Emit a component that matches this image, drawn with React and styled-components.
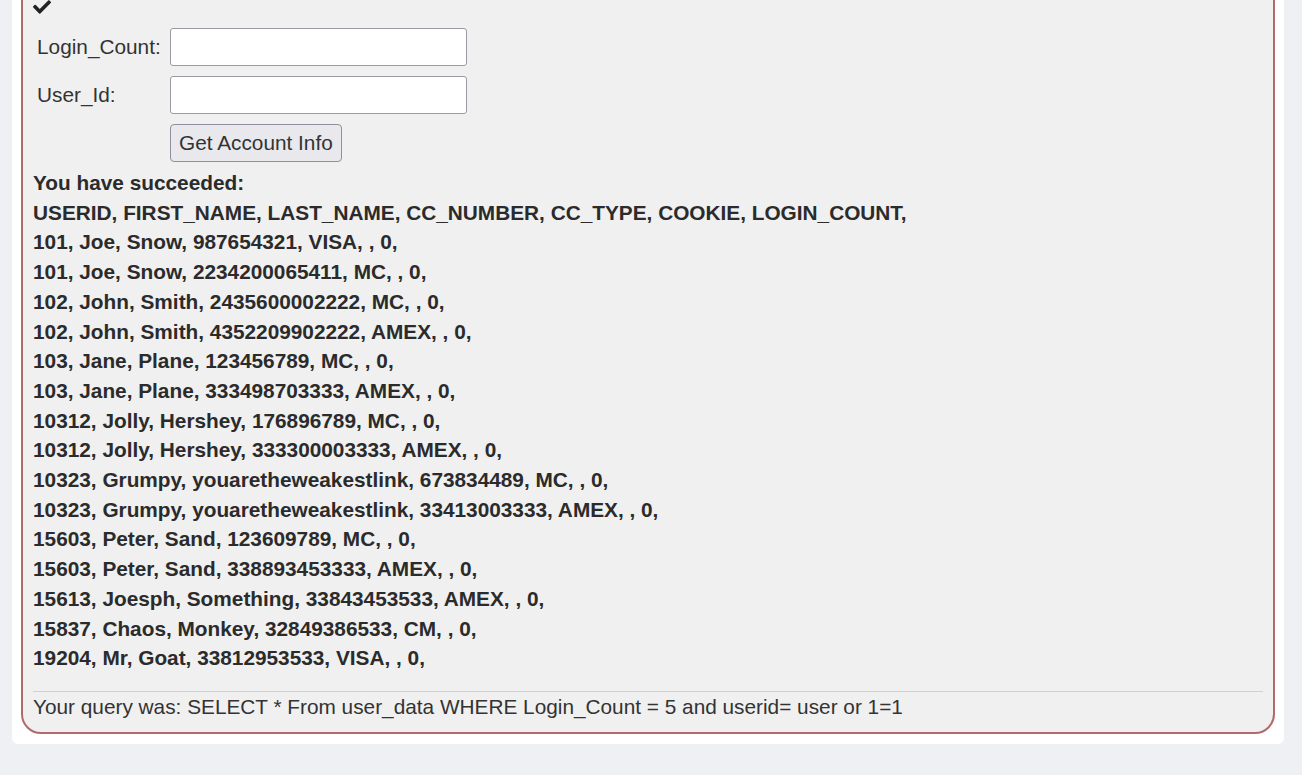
import styled, { createGlobalStyle } from "styled-components";
import { FaCheck } from "react-icons/fa";

const GlobalStyle = createGlobalStyle`
  html, body {
    margin: 0;
    padding: 0;
    background: #eff0f4;
    font-family: "Liberation Sans", Arial, sans-serif;
    color: #333;
    overflow: hidden;
  }
`;

const rows = [
  "101, Joe, Snow, 987654321, VISA, , 0,",
  "101, Joe, Snow, 2234200065411, MC, , 0,",
  "102, John, Smith, 2435600002222, MC, , 0,",
  "102, John, Smith, 4352209902222, AMEX, , 0,",
  "103, Jane, Plane, 123456789, MC, , 0,",
  "103, Jane, Plane, 333498703333, AMEX, , 0,",
  "10312, Jolly, Hershey, 176896789, MC, , 0,",
  "10312, Jolly, Hershey, 333300003333, AMEX, , 0,",
  "10323, Grumpy, youaretheweakestlink, 673834489, MC, , 0,",
  "10323, Grumpy, youaretheweakestlink, 33413003333, AMEX, , 0,",
  "15603, Peter, Sand, 123609789, MC, , 0,",
  "15603, Peter, Sand, 338893453333, AMEX, , 0,",
  "15613, Joesph, Something, 33843453533, AMEX, , 0,",
  "15837, Chaos, Monkey, 32849386533, CM, , 0,",
  "19204, Mr, Goat, 33812953533, VISA, , 0,",
];

const App = () => {
  return (
    <>
      <GlobalStyle />
      <Page>
        <Card>
          <Lesson>
            <Check>
              <FaCheck />
            </Check>
            <Form onSubmit={(e) => e.preventDefault()}>
              <Label>Login_Count:</Label>
              <Input type="text" />
              <Label>User_Id:</Label>
              <Input type="text" />
              <span />
              <div>
                <Button type="submit">Get Account Info</Button>
              </div>
            </Form>
            <Output>
              <Line>You have succeeded:</Line>
              <Line>USERID, FIRST_NAME, LAST_NAME, CC_NUMBER, CC_TYPE, COOKIE, LOGIN_COUNT,</Line>
              {rows.map((r, i) => (
                <Line key={i}>{r}</Line>
              ))}
            </Output>
            <Feedback>
              Your query was: SELECT * From user_data WHERE Login_Count = 5 and userid= user or 1=1
            </Feedback>
          </Lesson>
        </Card>
      </Page>
    </>
  );
};

export default App;

const Page = styled.div`
  padding: 0 18px 0 12px;
  margin-top: -40px;
`;

const Card = styled.div`
  background: #fff;
  padding: 9px 9px 10px 9px;
  border-radius: 0 0 6px 6px;
`;

const Lesson = styled.div`
  background: #f0f0f0;
  border: 2px solid #b26b6b;
  border-radius: 20px;
  padding: 10px 10px 10px 10px;
  font-size: 20.8px;
  line-height: 1.42857;
`;

const Check = styled.div`
  height: 35px;
  display: flex;
  align-items: flex-end;
  padding-left: 0;
  color: #222;
  font-size: 18px;
  svg {
    display: block;
  }
`;

const Form = styled.form`
  display: grid;
  grid-template-columns: 137px 297px;
  row-gap: 10px;
  align-items: center;
  margin-top: 12px;
`;

const Label = styled.label`
  padding-left: 4px;
  color: #333;
`;

const Input = styled.input`
  box-sizing: border-box;
  width: 297px;
  height: 38px;
  background: #fff;
  border: 1px solid #9a9aa6;
  border-radius: 3px;
  font-size: 20px;
`;

const Button = styled.button`
  display: block;
  box-sizing: border-box;
  height: 38px;
  padding: 0 8px;
  background: #e9e9ed;
  border: 1px solid #8f8f9d;
  border-radius: 4px;
  font-family: "Liberation Sans", Arial, sans-serif;
  font-size: 20.8px;
  color: #333;
`;

const Output = styled.div`
  margin-top: 6px;
  font-weight: bold;
  color: #2b2b2b;
`;

const Line = styled.div``;

const Feedback = styled.div`
  margin-top: 18px;
  border-top: 1px solid #d0d0d0;
  color: #333;
`;
